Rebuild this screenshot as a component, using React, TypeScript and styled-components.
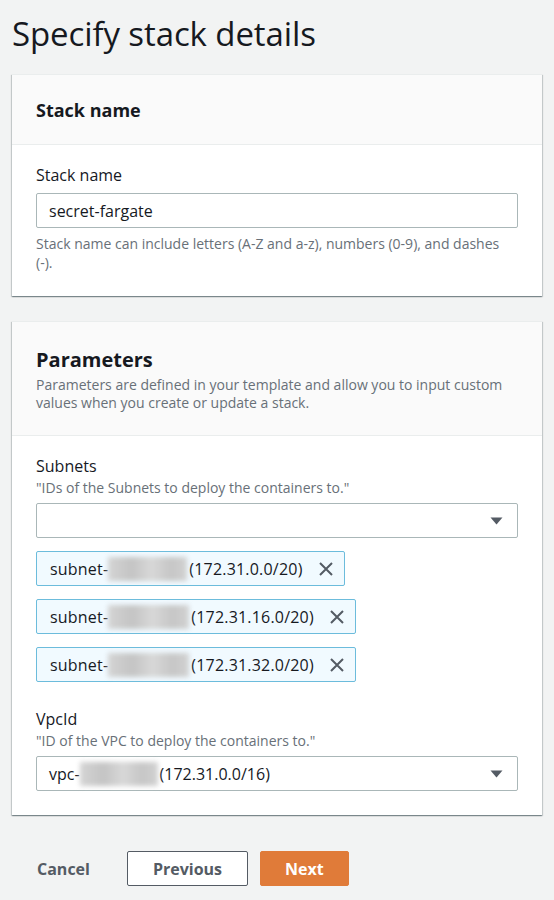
import styled, { createGlobalStyle } from 'styled-components';

const GlobalStyle = createGlobalStyle`
  html, body {
    margin: 0;
    padding: 0;
    background: #f2f3f3;
  }
  body {
    font-family: "Open Sans", "Noto Sans", "Liberation Sans", sans-serif;
    color: #16191f;
  }
`;

const subnets = [
  { id: 1, cidr: '172.31.0.0/20', blur: 79 },
  { id: 2, cidr: '172.31.16.0/20', blur: 81 },
  { id: 3, cidr: '172.31.32.0/20', blur: 81 },
];

const CaretIcon = () => (
  <svg width="13" height="8" viewBox="0 0 13 8">
    <path d="M0.5 0.5 H12.5 L6.5 7.5 Z" fill="#545b64" />
  </svg>
);

const CloseIcon = () => (
  <svg width="16" height="16" viewBox="0 0 16 16">
    <path d="M2 2 L14 14 M14 2 L2 14" stroke="#545b64" strokeWidth="2" fill="none" />
  </svg>
);

const App = () => {
  return (
    <Page>
      <GlobalStyle />
      <Title>Specify stack details</Title>

      <Card>
        <CardHeader>
          <CardTitle>Stack name</CardTitle>
        </CardHeader>
        <CardBody>
          <Field>
            <Label>Stack name</Label>
            <TextBox>secret-fargate</TextBox>
            <Hint>Stack name can include letters (A-Z and a-z), numbers (0-9), and dashes (-).</Hint>
          </Field>
        </CardBody>
      </Card>

      <Card>
        <CardHeader>
          <CardTitle $large>Parameters</CardTitle>
          <CardDesc>
            Parameters are defined in your template and allow you to input custom values when you
            create or update a stack.
          </CardDesc>
        </CardHeader>
        <CardBody>
          <Field>
            <Label>Subnets</Label>
            <Description>"IDs of the Subnets to deploy the containers to."</Description>
            <Select>
              <SelectValue />
              <CaretIcon />
            </Select>
            <TokenList>
              {subnets.map((s) => (
                <Token key={s.id}>
                  <TokenText>
                    subnet-
                    <Redacted style={{ width: s.blur }} />
                    ({s.cidr})
                  </TokenText>
                  <CloseIcon />
                </Token>
              ))}
            </TokenList>
          </Field>

          <Field>
            <Label>VpcId</Label>
            <Description>"ID of the VPC to deploy the containers to."</Description>
            <Select>
              <SelectValue>
                vpc-
                <Redacted style={{ width: 78 }} />
                (172.31.0.0/16)
              </SelectValue>
              <CaretIcon />
            </Select>
          </Field>
        </CardBody>
      </Card>

      <Actions>
        <LinkButton>Cancel</LinkButton>
        <Button>Previous</Button>
        <Button $primary>Next</Button>
      </Actions>
    </Page>
  );
};

export default App;

const Page = styled.div`
  padding: 12px 12px 20px;
  width: 530px;
`;

const Title = styled.h1`
  margin: 2px 0 20px;
  font-size: 33px;
  font-weight: 400;
  line-height: 40px;
  letter-spacing: -0.1px;
  color: #16191f;
`;

const Card = styled.section`
  background: #ffffff;
  border-top: 1px solid #eaeded;
  box-shadow: 0 1px 1px 0 rgba(0, 28, 36, 0.3), 1px 1px 1px 0 rgba(0, 28, 36, 0.15),
    -1px 1px 1px 0 rgba(0, 28, 36, 0.15);
  margin-bottom: 25px;
`;

const CardHeader = styled.div`
  background: #fafafa;
  border-bottom: 1px solid #eaeded;
  padding: 24px 24px 23px;
`;

const CardTitle = styled.h2<{ $large?: boolean }>`
  margin: 0;
  font-size: ${(p) => (p.$large ? '20px' : '18px')};
  line-height: ${(p) => (p.$large ? '28px' : '22px')};
  font-weight: 700;
  color: #16191f;
`;

const CardDesc = styled.p`
  margin: 2px 0 0;
  font-size: 14px;
  line-height: 18px;
  color: #687078;
`;

const CardBody = styled.div`
  padding: 19px 24px 24px;
  display: flex;
  flex-direction: column;
  gap: 26px;
`;

const Field = styled.div`
  display: flex;
  flex-direction: column;
`;

const Label = styled.div`
  font-size: 16px;
  line-height: 22px;
  color: #16191f;
`;

const Description = styled.div`
  font-size: 14px;
  line-height: 18px;
  color: #687078;
  margin-top: 2px;
`;

const TextBox = styled.div`
  margin-top: 7px;
  box-sizing: border-box;
  height: 35px;
  border: 1px solid #aab7b8;
  border-radius: 2px;
  padding: 0 12px;
  display: flex;
  align-items: center;
  font-size: 16px;
  color: #16191f;
`;

const Hint = styled.div`
  margin-top: 6px;
  font-size: 14px;
  line-height: 19px;
  color: #687078;
`;

const Select = styled.div`
  margin-top: 6px;
  box-sizing: border-box;
  height: 35px;
  border: 1px solid #aab7b8;
  border-radius: 2px;
  padding: 0 14px 0 12px;
  display: flex;
  align-items: center;
  justify-content: space-between;
`;

const SelectValue = styled.div`
  display: flex;
  align-items: center;
  font-size: 16px;
  color: #16191f;
`;

const TokenList = styled.div`
  margin-top: 13px;
  display: flex;
  flex-direction: column;
  align-items: flex-start;
  gap: 13px;
`;

const Token = styled.div`
  box-sizing: border-box;
  height: 35px;
  display: flex;
  align-items: center;
  gap: 15px;
  padding: 0 10px 0 13px;
  background: #f1faff;
  border: 1px solid #6cbcdc;
  border-radius: 2px;
`;

const TokenText = styled.span`
  display: flex;
  align-items: center;
  font-size: 16px;
  letter-spacing: 0.2px;
  color: #16191f;
`;

const Redacted = styled.span`
  display: inline-block;
  height: 24px;
  margin: 0 2px 0 0;
  background: linear-gradient(90deg, #d4d4d4, #c4c4c4 30%, #d8d8d8 55%, #c6c6c6 80%, #d2d2d2);
  filter: blur(2.5px);
`;

const Actions = styled.div`
  display: flex;
  align-items: center;
  gap: 12px;
  margin-top: 36px;
  padding-left: 25px;
`;

const LinkButton = styled.button`
  background: none;
  border: none;
  padding: 0;
  margin-right: 25px;
  font-family: inherit;
  font-size: 16px;
  font-weight: 700;
  color: #545b64;
  cursor: pointer;
`;

const Button = styled.button<{ $primary?: boolean }>`
  box-sizing: border-box;
  height: 35px;
  padding: 0 ${(p) => (p.$primary ? '24px' : '25px')};
  border-radius: 2px;
  border: 1px solid ${(p) => (p.$primary ? '#e07b39' : '#545b64')};
  background: ${(p) => (p.$primary ? '#e07b39' : '#ffffff')};
  color: ${(p) => (p.$primary ? '#ffffff' : '#545b64')};
  font-family: inherit;
  font-size: 16px;
  font-weight: 700;
  cursor: pointer;
`;
